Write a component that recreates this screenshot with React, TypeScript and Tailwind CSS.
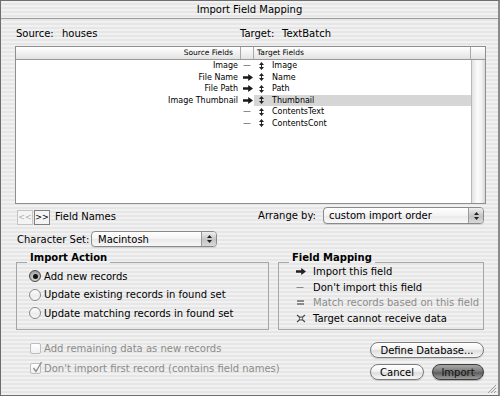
import React from "react";

const stripe =
  "bg-[repeating-linear-gradient(180deg,#f1f1f1_0px,#f1f1f1_2px,#e6e6e6_2px,#e6e6e6_4px)]";

function ImportArrow({ color = "#1a1a1a" }: { color?: string }) {
  return (
    <svg width="10" height="7" viewBox="0 0 10 7">
      <path d="M0 2.2h5.2V0L10 3.5 5.2 7V4.8H0z" fill={color} />
    </svg>
  );
}

function Dash() {
  return (
    <svg width="8" height="7" viewBox="0 0 8 7">
      <line x1="0.5" y1="3.5" x2="7.5" y2="3.5" stroke="#8a8a8a" strokeWidth="1" />
    </svg>
  );
}

function UpDown() {
  return (
    <svg width="5" height="8" viewBox="0 0 5 8">
      <path d="M2.5 0L5 3H0z M2.5 8L0 5h5z" fill="#222" />
      <rect x="2" y="2.5" width="1" height="3" fill="#222" />
    </svg>
  );
}

function MatchIcon() {
  return (
    <svg width="7" height="6" viewBox="0 0 7 6">
      <rect x="0" y="0" width="7" height="2" fill="#8a8a8a" />
      <rect x="0" y="3" width="7" height="2" fill="#8a8a8a" />
    </svg>
  );
}

function CannotIcon() {
  return (
    <svg width="10" height="9" viewBox="0 0 10 9">
      <path d="M1 1L9 8 M9 1L1 8" stroke="#444" strokeWidth="1.1" />
      <circle cx="5" cy="4.5" r="1.6" fill="#f0f0f0" stroke="#444" strokeWidth="0.9" />
    </svg>
  );
}

function PopupArrows() {
  return (
    <div className="w-[15px] h-full flex flex-col items-center justify-center gap-[2px] border-l border-[#9a9a9a] bg-[linear-gradient(180deg,#eeeeee,#c4c4c4_55%,#d8d8d8)] rounded-r-[3px]">
      <svg width="5" height="3" viewBox="0 0 5 3">
        <path d="M2.5 0L5 3H0z" fill="#222" />
      </svg>
      <svg width="5" height="3" viewBox="0 0 5 3">
        <path d="M0 0h5L2.5 3z" fill="#222" />
      </svg>
    </div>
  );
}

function Popup({ label, width, pl }: { label: string; width: string; pl: string }) {
  return (
    <div
      className={`${width} h-full flex items-stretch rounded-[4px] border border-[#8a8a8a] bg-[linear-gradient(180deg,#ffffff,#f3f3f3_50%,#e9e9e9_52%,#f8f8f8)] shadow-[0_1px_0_#d0d0d0]`}
    >
      <div className={`flex-1 flex items-center ${pl} text-[10px]`}>{label}</div>
      <PopupArrows />
    </div>
  );
}

function Radio({ checked }: { checked?: boolean }) {
  return checked ? (
    <div className="w-[12px] h-[12px] rounded-full border border-[#4a4a4a] bg-[radial-gradient(circle_at_50%_70%,#e0e0e0,#8c8c8c)] flex items-center justify-center">
      <div className="w-[5px] h-[5px] rounded-full bg-[#111]" />
    </div>
  ) : (
    <div className="w-[12px] h-[12px] rounded-full border border-[#8a8a8a] bg-[linear-gradient(180deg,#ffffff,#ececec_60%,#fafafa)]" />
  );
}

function Checkbox({ checked }: { checked?: boolean }) {
  return (
    <div className="relative w-[11px] h-[11px] rounded-[2px] border border-[#bdbdbd] bg-[linear-gradient(180deg,#ffffff,#f0f0f0)]">
      {checked && (
        <svg className="absolute left-[1px] -top-[3px]" width="11" height="12" viewBox="0 0 11 12">
          <path d="M1.5 7L4 10.5L9.5 1" stroke="#8c8c8c" strokeWidth="1.3" fill="none" />
        </svg>
      )}
    </div>
  );
}

const aquaBtn =
  "rounded-full border border-[#7c7c7c] bg-[linear-gradient(180deg,#ffffff_0%,#f2f2f2_45%,#dedede_55%,#f7f7f7_100%)] shadow-[0_1px_1px_rgba(0,0,0,0.15)] flex items-center justify-center text-[10px]";

const rows: { src: string; map: "dash" | "arrow"; tgt: string; hl?: boolean }[] = [
  { src: "Image", map: "dash", tgt: "Image" },
  { src: "File Name", map: "arrow", tgt: "Name" },
  { src: "File Path", map: "arrow", tgt: "Path" },
  { src: "Image Thumbnail", map: "arrow", tgt: "Thumbnail", hl: true },
  { src: "", map: "dash", tgt: "ContentsText" },
  { src: "", map: "dash", tgt: "ContentsCont" },
];

export default function App() {
  return (
    <div
      className={`relative w-[500px] h-[396px] overflow-hidden flex flex-col border-t border-l border-b border-[#6e6e6e] border-r-2 border-r-[#8a8a8a] ${stripe} font-['DejaVu_Sans',sans-serif] text-[9.5px] text-black`}
    >
      {/* Title bar */}
      <div className="h-[18px] shrink-0 flex items-center justify-center border-b border-[#9c9c9c] text-[10px] leading-none">
        Import Field Mapping
      </div>

      <div className="flex-1 flex flex-col pl-[14px] pr-[12px]">
        {/* Source / Target */}
        <div className="mt-[9px] h-[12px] flex items-center leading-[12px] text-[10px]">
          <div className="w-[225px] pl-[1px] flex">
            <span className="w-[46px]">Source:</span>
            <span>houses</span>
          </div>
          <div className="flex">
            <span className="w-[42px]">Target:</span>
            <span>TextBatch</span>
          </div>
        </div>

        {/* Table */}
        <div className="mt-[6px] w-[471px] h-[158px] flex flex-col border border-[#8e8e8e] bg-white">
          <div className="h-[13px] shrink-0 flex border-b border-[#9a9a9a] bg-[linear-gradient(180deg,#ffffff,#f1f1f1_50%,#e2e2e2)] text-[7.5px] leading-[12px]">
            <div className="w-[225px] text-right pr-[7px] border-r border-[#a8a8a8]">Source Fields</div>
            <div className="w-[13px] border-r border-[#a8a8a8]" />
            <div className="flex-1 pl-[3px] border-r border-[#a8a8a8]">Target Fields</div>
            <div className="w-[14px]" />
          </div>
          <div className="flex-1 flex">
            <div className="flex-1 flex flex-col">
              {rows.map((r, i) => (
                <div key={i} className="h-[11.5px] grid grid-cols-[225px_13px_1fr] text-[8px] leading-[11.5px]">
                  <div className="text-right pr-[3px]">{r.src}</div>
                  <div className="flex items-center pl-[2px]">
                    {r.map === "arrow" ? <ImportArrow /> : <Dash />}
                  </div>
                  <div className={`flex items-center pl-[5px] ${r.hl ? "bg-[#d6d6d6]" : ""}`}>
                    <UpDown />
                    <span className="ml-[8px]">{r.tgt}</span>
                  </div>
                </div>
              ))}
            </div>
            <div className="w-[14px] border-l border-[#b8b8b8] bg-[linear-gradient(90deg,#e2e2e2,#fbfbfb_40%,#f4f4f4_70%,#d8d8d8)]" />
          </div>
        </div>

        {/* Field names / Arrange by */}
        <div className="mt-[3px] h-[17px] flex items-center">
          <div className="self-end -mb-[1px] ml-[2px] w-[16px] h-[15px] border border-[#c4c4c4] flex items-center justify-center text-[8px] text-[#b0b0b0] bg-[#f4f4f4]">
            &lt;&lt;
          </div>
          <div className="self-end -mb-[1px] ml-[1px] w-[16px] h-[15px] border border-[#7e7e7e] flex items-center justify-center text-[8px] bg-[#f4f4f4]">
            &gt;&gt;
          </div>
          <span className="ml-[5px] mt-[2px] text-[10px]">Field Names</span>
          <div className="ml-auto mr-[2px] h-full flex items-center">
            <span className="text-[10px] mr-[7px]">Arrange by:</span>
            <Popup label="custom import order" width="w-[161px]" pl="pl-[5px]" />
          </div>
        </div>

        {/* Character set */}
        <div className="mt-[7px] h-[16px] flex items-center">
          <span className="ml-[2px] w-[74px] text-[10px]">Character Set:</span>
          <Popup label="Macintosh" width="w-[126px]" pl="pl-[6px]" />
        </div>

        {/* Group boxes */}
        <div className="mt-[5px] flex">
          <fieldset className="ml-[1px] w-[253px] h-[78px] border border-[#a6a6a6]">
            <legend className="ml-[10px] px-[3px] pb-[8px] font-bold text-[10px] leading-[12px]">Import Action</legend>
            <div className="-mt-[5px] flex flex-col">
              {[
                { t: "Add new records", c: true },
                { t: "Update existing records in found set" },
                { t: "Update matching records in found set" },
              ].map((o, i) => (
                <div key={i} className="h-[18.5px] flex items-center pl-[12px] text-[10px]">
                  <Radio checked={o.c} />
                  <span className="ml-[3px]">{o.t}</span>
                </div>
              ))}
            </div>
          </fieldset>
          <fieldset className="ml-[9px] w-[206px] h-[78px] border border-[#a6a6a6]">
            <legend className="ml-[10px] px-[3px] pb-[8px] font-bold text-[10px] leading-[12px]">Field Mapping</legend>
            <div className="-mt-[8px] flex flex-col text-[10px]">
              <div className="h-[15.5px] flex items-center pl-[17px]">
                <div className="w-[17px] flex items-center"><ImportArrow color="#222" /></div>
                <span>Import this field</span>
              </div>
              <div className="h-[15.5px] flex items-center pl-[17px]">
                <div className="w-[17px] flex items-center"><Dash /></div>
                <span>Don't import this field</span>
              </div>
              <div className="h-[15.5px] flex items-center pl-[17px]">
                <div className="w-[17px] flex items-center pl-[1px]"><MatchIcon /></div>
                <span className="text-[#8c8c8c]">Match records based on this field</span>
              </div>
              <div className="h-[15.5px] flex items-center pl-[17px]">
                <div className="w-[17px] flex items-center"><CannotIcon /></div>
                <span>Target cannot receive data</span>
              </div>
            </div>
          </fieldset>
        </div>

        {/* Bottom */}
        <div className="flex">
          <div className="mt-[8px] pl-[15px] flex flex-col text-[10px] text-[#8c8c8c]">
            <div className="h-[20px] flex items-center">
              <Checkbox />
              <span className="ml-[3px]">Add remaining data as new records</span>
            </div>
            <div className="h-[20px] flex items-center">
              <Checkbox checked />
              <span className="ml-[3px]">Don't import first record (contains field names)</span>
            </div>
          </div>
          <div className="ml-auto mr-[2px] mt-[12px] flex flex-col">
            <div className={`w-[114px] h-[16px] ${aquaBtn}`}>Define Database...</div>
            <div className="mt-[6px] flex">
              <div className={`w-[54px] h-[16px] ${aquaBtn}`}>Cancel</div>
              <div className="ml-[8px] w-[52px] h-[16px] rounded-full border border-[#3c3c3c] bg-[linear-gradient(180deg,#a8a8a8_0%,#7a7a7a_45%,#5e5e5e_55%,#9c9c9c_100%)] shadow-[0_1px_1px_rgba(0,0,0,0.25)] flex items-center justify-center text-[10px] text-[#111]">
                Import
              </div>
            </div>
          </div>
        </div>
      </div>

      {/* Resize grip */}
      <svg className="absolute right-[1px] bottom-[1px]" width="11" height="11" viewBox="0 0 11 11">
        <path d="M10 2L2 10 M10 5L5 10 M10 8L8 10" stroke="#9a9a9a" strokeWidth="1" />
      </svg>
    </div>
  );
}
